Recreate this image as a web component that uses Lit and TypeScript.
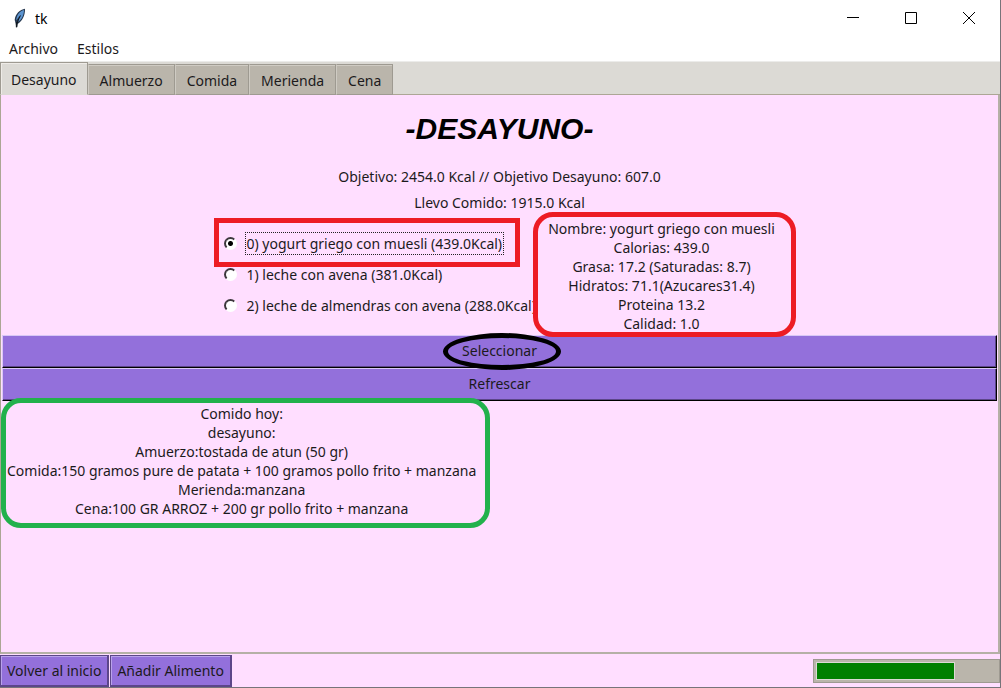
import { LitElement, html, css, svg } from "lit";
import { customElement, state } from "lit/decorators.js";

const TABS = ["Desayuno", "Almuerzo", "Comida", "Merienda", "Cena"];

const OPTIONS = [
  "0) yogurt griego con muesli (439.0Kcal)",
  "1) leche con avena (381.0Kcal)",
  "2) leche de almendras con avena (288.0Kcal)",
];

const DETAILS = [
  "Nombre: yogurt griego con muesli",
  "Calorias: 439.0",
  "Grasa: 17.2 (Saturadas: 8.7)",
  "Hidratos: 71.1(Azucares31.4)",
  "Proteina 13.2",
  "Calidad: 1.0",
];

const EATEN = [
  "Comido hoy:",
  "desayuno:",
  "Amuerzo:tostada de atun (50 gr)",
  "Comida:150 gramos pure de patata + 100 gramos pollo frito + manzana",
  "Merienda:manzana",
  "Cena:100 GR ARROZ + 200 gr pollo frito + manzana",
];

@customElement("app-root")
export class AppRoot extends LitElement {
  @state() private tab = 0;
  @state() private option = 0;

  static styles = css`
    :host {
      display: block;
      font: 14px/19px "Noto Sans", "Open Sans", sans-serif;
      color: #1c1a1c;
    }
    * {
      box-sizing: border-box;
    }
    button {
      font: inherit;
      color: inherit;
      margin: 0;
      padding: 0;
      border: 0;
      background: none;
    }
    .window {
      display: flex;
      flex-direction: column;
      min-height: 100vh;
      background: #ffdeff;
      border-right: 1px solid #77747a;
      border-bottom: 1px solid #77747a;
    }
    .titlebar {
      display: flex;
      align-items: center;
      height: 36px;
      padding: 0 2px 0 12px;
      background: #fff;
      color: #000;
    }
    .feather {
      width: 16px;
      height: 20px;
      margin-right: 7px;
    }
    .caption {
      flex: 1;
    }
    .control {
      display: grid;
      place-items: center;
      width: 58px;
      height: 36px;
    }
    .menubar {
      display: flex;
      align-items: flex-start;
      gap: 19px;
      height: 25px;
      padding: 3px 9px 0;
      background: #fff;
    }
    .tabs {
      display: flex;
      align-items: flex-end;
      height: 34px;
      background: #dcdad5;
      border-top: 1px solid #ececea;
      box-shadow: inset 0 -1px #aca695;
    }
    .tab {
      height: 31px;
      padding: 1px 11px 0;
      background: #bab5ab;
      border: 1px solid #9e9a91;
      border-left-color: #cfcbc3;
      box-shadow: inset 0 1px #cfcbc3;
    }
    .tab.active {
      height: 33px;
      padding: 2px 10px 0;
      background: #dcdad5;
      border-left-color: #9e9a91;
      border-bottom-color: #dcdad5;
      box-shadow: inset 1px 1px #eeebe7;
    }
    .panel {
      flex: 1;
      padding: 0 1px;
      border: 1px solid #aca695;
      border-top: 0;
      border-right: 2px solid #b5b0a6;
      border-bottom: 2px solid #b5b0a6;
    }
    h1 {
      margin: 0;
      padding: 16px 0 20px;
      font: italic bold 30px/36px "Liberation Sans", Arial, sans-serif;
      text-align: center;
      color: #000;
    }
    .goal {
      margin: 0;
      padding-bottom: 7px;
      line-height: 19px;
      text-align: center;
    }
    .choice {
      display: flex;
      justify-content: center;
      align-items: flex-start;
      padding-bottom: 2px;
    }
    .options {
      width: 324px;
      margin: 0;
      padding: 9px 0 0 6px;
      border: 0;
      position: relative;
    }
    .option {
      display: flex;
      align-items: center;
      gap: 8px;
      height: 31px;
      white-space: nowrap;
    }
    .option input {
      appearance: none;
      width: 13px;
      height: 13px;
      margin: 0;
      border: 2px solid;
      border-color: #3c373c #fff #fff #3c373c;
      border-radius: 50%;
      background: #fff;
      outline: none;
    }
    .option input:checked {
      background: radial-gradient(circle, #000 2px, #fff 3px);
    }
    .option span {
      padding: 1px;
      border: 1px solid transparent;
    }
    .option input:checked + span {
      border: 1px dotted #222;
    }
    .details {
      position: relative;
      width: 240px;
    }
    .lines {
      text-align: center;
      white-space: nowrap;
    }
    .mark {
      position: absolute;
      pointer-events: none;
      border: 5px solid #ed1c24;
    }
    .mark.choice-mark {
      inset: -1px 22px auto -4px;
      height: 49px;
    }
    .mark.details-mark {
      inset: -7px -14px -4px -9px;
      border-radius: 20px;
      z-index: 1;
    }
    .mark.select-mark {
      inset: -3px auto -3px calc(50% - 57px);
      width: 118px;
      border-color: #000;
      border-radius: 50%;
      z-index: 1;
    }
    .mark.eaten-mark {
      inset: -6px -12px -10px -1px;
      border-color: #22b14c;
      border-radius: 20px;
    }
    .wide {
      position: relative;
      display: block;
      width: 100%;
      height: 33px;
      padding-bottom: 2px;
      background: #9370db;
      border: 1px solid;
      border-color: #d8c8f6 #000 #000 #d8c8f6;
      box-shadow: inset -1px -1px #5c4689;
    }
    .eaten {
      position: relative;
      width: fit-content;
      margin-top: 3px;
      padding: 0 2px 0 5px;
    }
    .footer {
      display: flex;
      align-items: center;
      gap: 1px;
      height: 33px;
    }
    .small {
      height: 32px;
      padding: 0 6px;
      background: #9370db;
      border: 1px solid #5c4689;
      border-width: 1px 2px 2px 1px;
      box-shadow: inset 1px 1px #b9a2ea;
    }
    progress {
      appearance: none;
      width: 187px;
      height: 24px;
      margin-left: auto;
      padding: 2px;
      border: 1px solid #9e9a91;
      background: #bab5ab;
    }
    progress::-webkit-progress-bar {
      background: #bab5ab;
    }
    progress::-webkit-progress-value {
      background: #008000;
      border: 1px solid #dcdad5;
      box-sizing: border-box;
    }
  `;

  private lines(items: string[]) {
    return items.map((line) => html`<div>${line}</div>`);
  }

  private glyph(shape: unknown) {
    return html`<svg width="12" height="12" viewBox="0 0 12 12" fill="none" stroke="#000">${shape}</svg>`;
  }

  render() {
    return html`
      <div class="window">
        <header class="titlebar">
          <svg class="feather" viewBox="0 0 16 20">
            <path d="M13 .8C8 1.500 3.200 6 2.700 12l1 3.500.5 3.700 1-.2.200-3C10 13.500 13.300 8 13 .8Z" fill="#24364d" />
            <path d="M12 2C8 3 4.500 7 4.200 12.500L8.300 7 6 14C9.500 12 12 7 12 2Z" fill="#5b93cf" />
            <path d="M8.500 7.500C6.500 11 5.200 14 4.500 19" fill="none" stroke="#111820" />
            <path d="M4.500 14v5.300" stroke="#111820" stroke-width="1.300" />
          </svg>
          <span class="caption">tk</span>
          <button class="control" aria-label="Minimizar">${this.glyph(svg`<path d="M0 5.500h12"/>`)}</button>
          <button class="control" aria-label="Maximizar">${this.glyph(svg`<path d="M.5.500h11v11H.5Z"/>`)}</button>
          <button class="control" aria-label="Cerrar">${this.glyph(svg`<path d="M0 0l12 12M12 0L0 12"/>`)}</button>
        </header>
        <nav class="menubar">
          <button>Archivo</button>
          <button>Estilos</button>
        </nav>
        <div class="tabs" role="tablist">
          ${TABS.map(
            (name, i) => html`<button
              role="tab"
              class="tab ${i === this.tab ? "active" : ""}"
              aria-selected=${i === this.tab}
              @click=${() => (this.tab = i)}
            >${name}</button>`
          )}
        </div>
        <main class="panel">
          <h1>-DESAYUNO-</h1>
          <p class="goal">Objetivo: 2454.0 Kcal // Objetivo Desayuno: 607.0</p>
          <p class="goal">Llevo Comido: 1915.0 Kcal</p>
          <div class="choice">
            <div class="options" role="radiogroup" aria-label="Desayuno">
              ${OPTIONS.map(
                (label, i) => html`<label class="option">
                  <input
                    type="radio"
                    name="desayuno"
                    .checked=${i === this.option}
                    @change=${() => (this.option = i)}
                  /><span>${label}</span>
                </label>`
              )}
              <div class="mark choice-mark"></div>
            </div>
            <div class="details lines">
              ${this.lines(DETAILS)}
              <div class="mark details-mark"></div>
            </div>
          </div>
          <button class="wide">Seleccionar<span class="mark select-mark"></span></button>
          <button class="wide">Refrescar</button>
          <div class="eaten lines">
            ${this.lines(EATEN)}
            <div class="mark eaten-mark"></div>
          </div>
        </main>
        <footer class="footer">
          <button class="small">Volver al inicio</button>
          <button class="small">Añadir Alimento</button>
          <progress max="100" value="77" aria-label="Kcal"></progress>
        </footer>
      </div>
    `;
  }
}
